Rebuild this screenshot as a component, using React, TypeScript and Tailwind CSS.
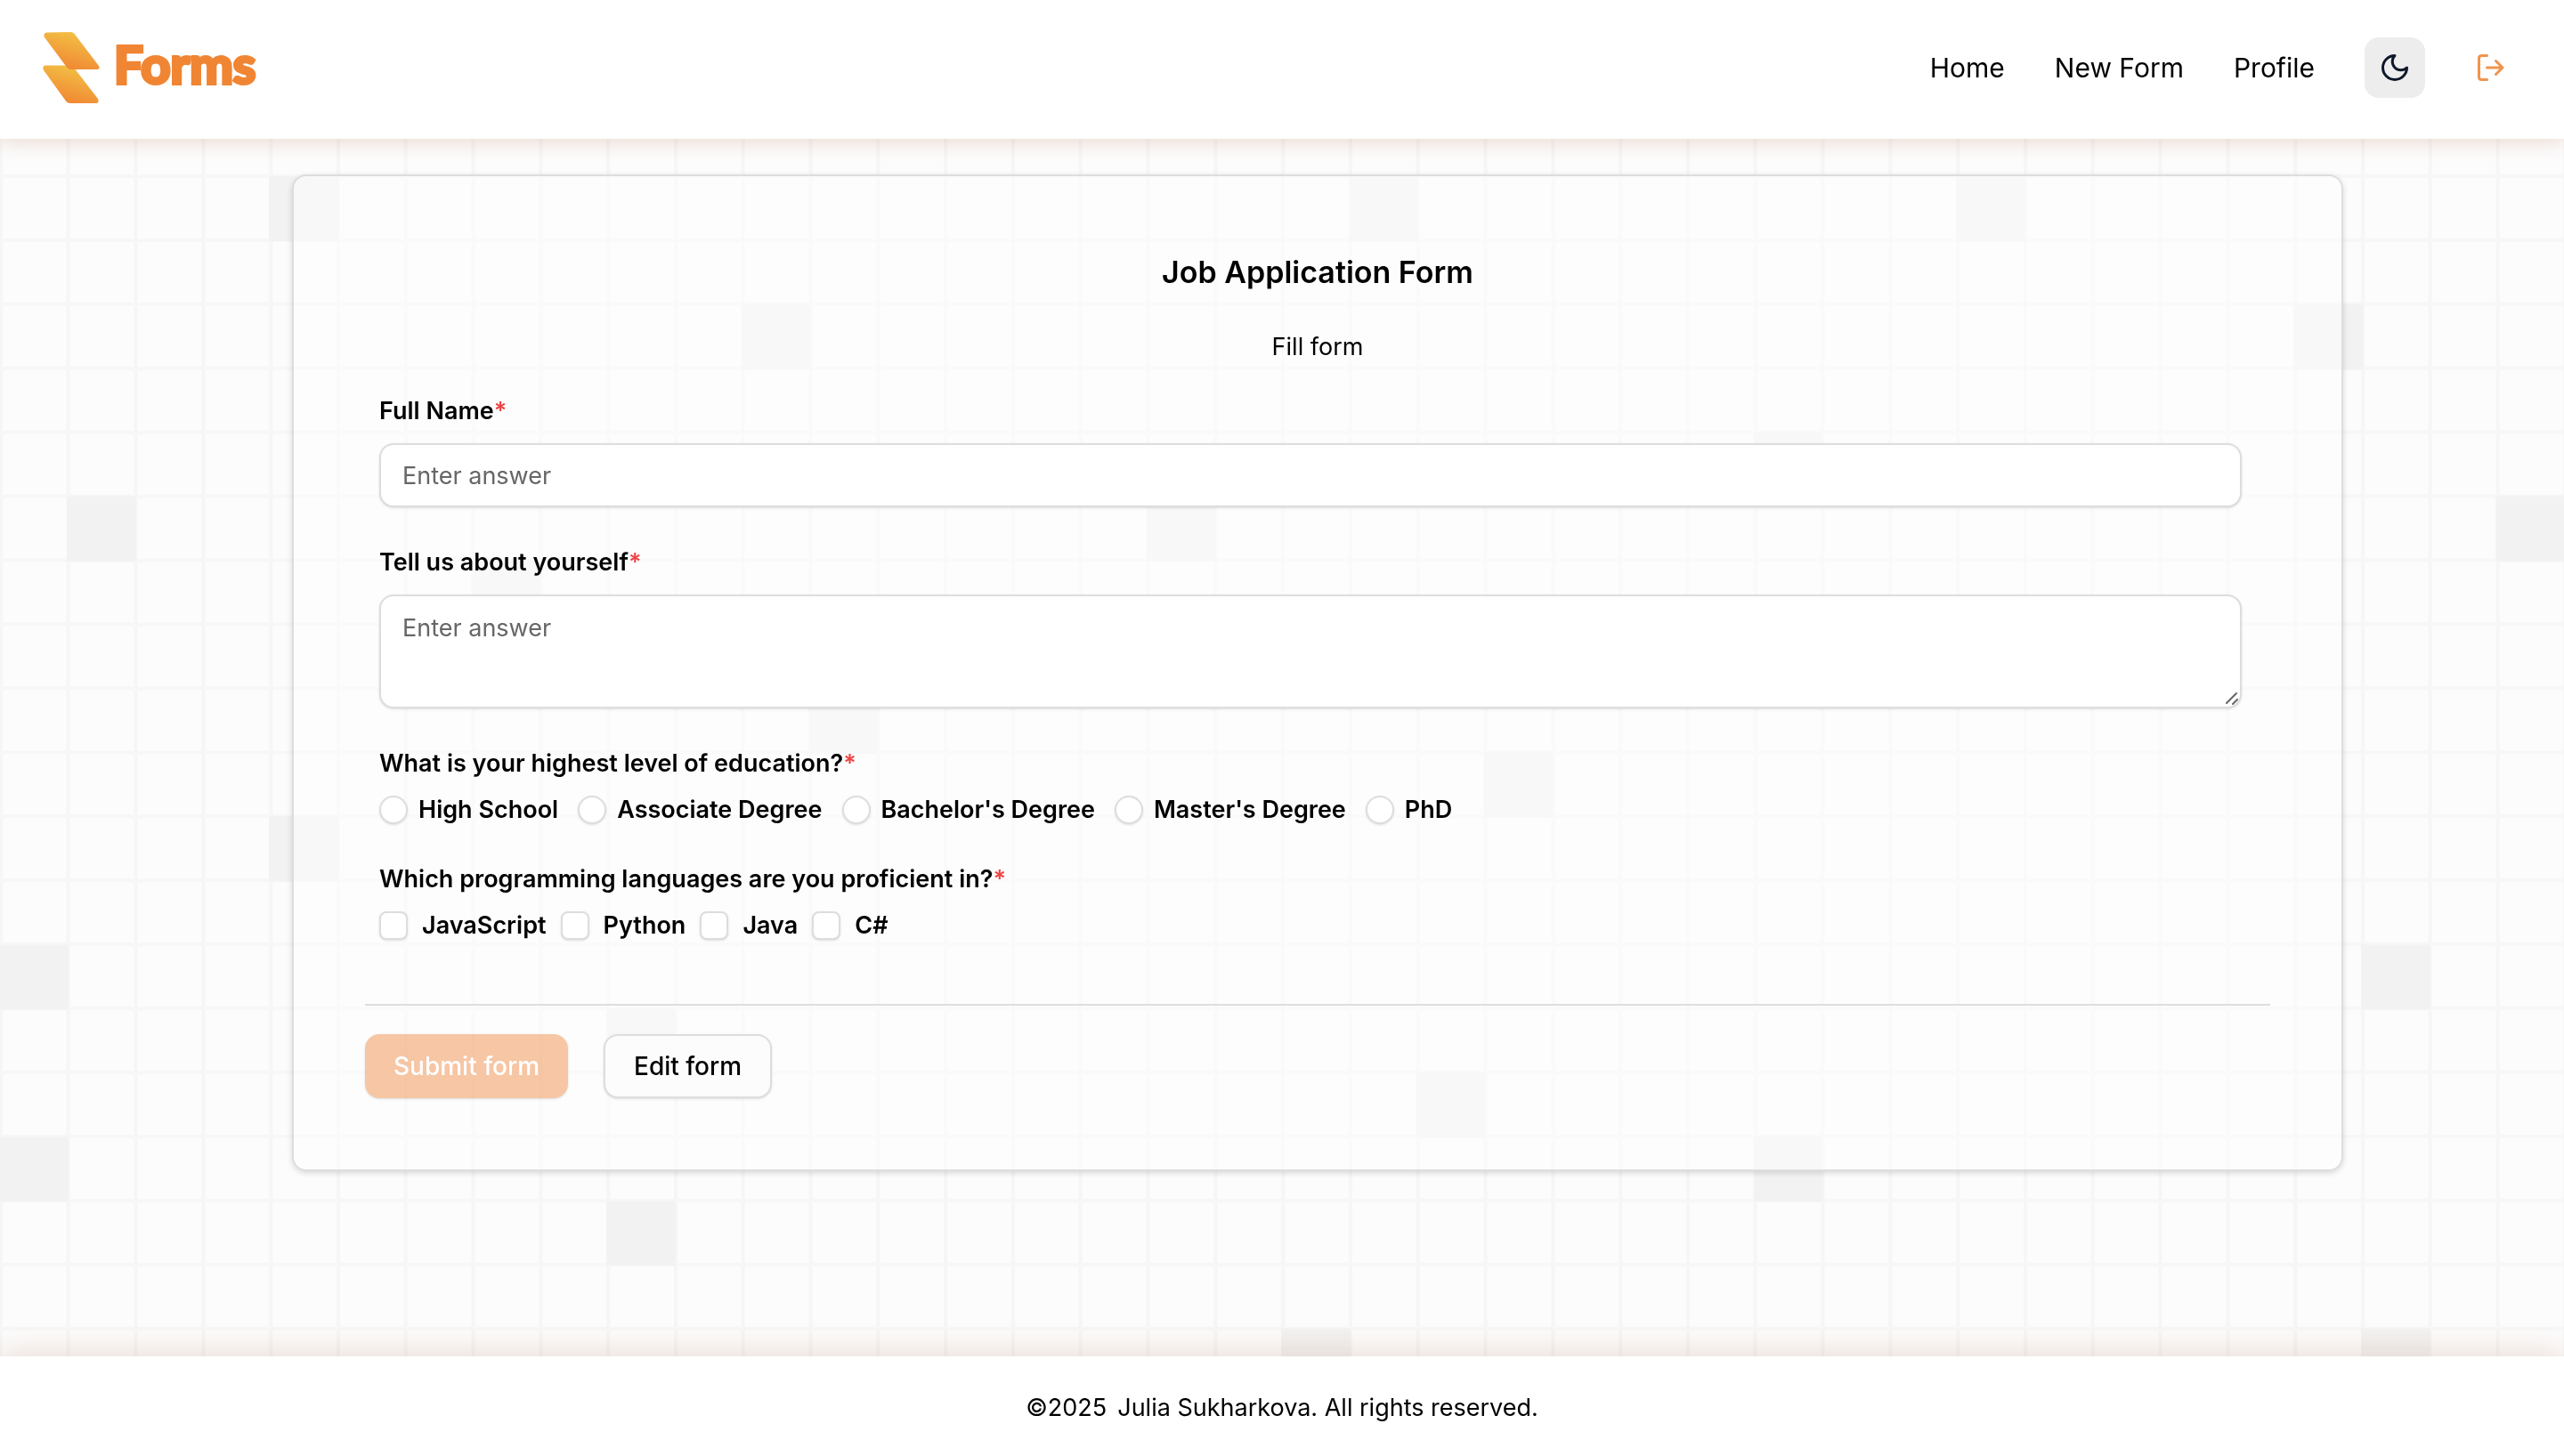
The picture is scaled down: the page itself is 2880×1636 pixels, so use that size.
import React from "react";

const COL = 75.8;
const ROW = 71.94;
const TOP = 126;
const shaded: [number, number][] = [
  [4, 1], [20, 1], [29, 1], [11, 3], [34, 3], [26, 5], [1, 6], [17, 6], [37, 6], [7, 7],
  [12, 9], [22, 10], [4, 11], [0, 13], [35, 13], [9, 14], [21, 15], [0, 16], [26, 16],
  [9, 17], [19, 19], [35, 19],
];
const education = ["High School", "Associate Degree", "Bachelor's Degree", "Master's Degree", "PhD"];
const languages = ["JavaScript", "Python", "Java", "C#"];

function Backdrop() {
  return (
    <svg className="fixed inset-0 -z-10 size-full" viewBox="0 0 2880 1636" preserveAspectRatio="xMidYMid slice" aria-hidden="true">
      <rect width="2880" height="1636" fill="#fcfcfc" />
      {Array.from({ length: 39 }, (_, i) => (
        <path key={i} d={`M${i * COL + 1} 0V1636`} stroke="#f6f6f6" strokeWidth="4" />
      ))}
      {Array.from({ length: 22 }, (_, i) => (
        <path key={i} d={`M0 ${TOP + i * ROW}H2880`} stroke="#f7f7f7" strokeWidth="4" />
      ))}
      {shaded.map(([c, r]) => (
        <rect key={`${c}-${r}`} x={c * COL - 1} y={TOP + r * ROW} width={COL + 2} height={ROW + 1} fill="#f2f2f2" />
      ))}
    </svg>
  );
}

function Logo() {
  return (
    <a href="#" className="flex items-center gap-4" aria-label="Forms">
      <svg className="h-20 w-16" viewBox="0 0 64 80" aria-hidden="true">
        <defs>
          <linearGradient id="bolt" x1="0.75" y1="0" x2="0.35" y2="1">
            <stop offset="0" stopColor="#f3c545" />
            <stop offset="1" stopColor="#f08533" />
          </linearGradient>
        </defs>
        <path d="M3 37.500H30Q33 37.500 35 40L62 75Q64 80 59 80H31Q28 80 26 77.500L1 43Q-1 38 3 37.500Z" fill="url(#bolt)" />
        <path d="M5 0.500L32 0Q34 0 36 2.500L63 38Q65 42 60 42H32Q29 42 27 39.500L2 6Q0 1 5 0.500Z" fill="url(#bolt)" />
      </svg>
      <span className="pb-2 font-[Lato,sans-serif] text-[58px] leading-[72px] font-bold text-[#f08533] [-webkit-text-stroke:4px_#f08533]">Forms</span>
    </a>
  );
}

function Required() {
  return <span className="text-[#ef4444]">*</span>;
}

export default function App() {
  return (
    <div className="isolate flex min-h-screen flex-col font-[Inter,sans-serif] text-[27px] leading-10 text-black">
      <Backdrop />
      <header className="flex h-[156px] items-center justify-between bg-white px-12 pb-1 shadow-[0_4px_20px_rgba(160,70,30,0.18)]">
        <Logo />
        <nav className="flex items-center gap-14 text-[31px]">
          <div className="flex items-center gap-14 text-[30px]">
            <a href="#">Home</a>
            <a href="#">New Form</a>
            <a href="#">Profile</a>
          </div>
          <button type="button" aria-label="Toggle theme" className="grid size-[68px] place-items-center rounded-2xl bg-[#ededed] text-[#0f172a]">
            <svg className="size-9" viewBox="0 0 24 24" fill="none" stroke="currentColor" strokeWidth="2" strokeLinecap="round" strokeLinejoin="round" aria-hidden="true">
              <path d="M12 3a6 6 0 0 0 9 9 9 9 0 1 1-9-9Z" />
            </svg>
          </button>
          <button type="button" aria-label="Log out" className="mr-4 grid size-9 place-items-center text-[#f0944d]">
            <svg width="30" height="30" viewBox="0 0 30 30" fill="none" stroke="currentColor" strokeWidth="3" strokeLinecap="round" strokeLinejoin="round" aria-hidden="true">
              <path d="M10.500 1.500H4.500Q1.500 1.500 1.500 4.500V25.500Q1.500 28.500 4.500 28.500H10.500M10.500 15H28M20.500 7.500L28 15L20.500 22.500" />
            </svg>
          </button>
        </nav>
      </header>

      <main className="flex flex-1 items-start justify-center pt-10 pb-20">
        <form className="ml-20 w-4/5 rounded-2xl border-2 border-[#dddddd] bg-[#fdfdfd]/50 px-20 pt-20 pb-20 shadow-[0_2px_6px_rgba(0,0,0,0.15)]">
          <h1 className="pt-1 text-center text-[34px] leading-[48px] font-semibold">Job Application Form</h1>
          <p className="mt-10 text-center">Fill form</p>
          <div className="flex flex-col gap-[42px] pr-8 pl-4">
            <div className="mt-8 flex flex-col gap-4">
              <label htmlFor="name" className="font-semibold">Full Name<Required /></label>
              <input id="name" placeholder="Enter answer" className="h-[72px] w-full rounded-2xl border-2 border-[#dddddd] bg-white px-6 shadow-sm placeholder:text-[#666666]" />
            </div>
            <div className="flex flex-col gap-4">
              <label htmlFor="about" className="font-semibold">Tell us about yourself<Required /></label>
              <div className="relative flex">
                <textarea id="about" placeholder="Enter answer" className="h-32 w-full resize-none rounded-2xl border-2 border-[#dddddd] bg-white px-6 py-4 shadow-sm placeholder:text-[#666666]" />
                <svg className="absolute right-1 bottom-1 size-4" viewBox="0 0 16 16" stroke="#666666" strokeWidth="2" strokeLinecap="round" aria-hidden="true">
                  <path d="M3 14L14 3M10 15L15 10" />
                </svg>
              </div>
            </div>
            <fieldset>
              <legend className="font-semibold">What is your highest level of education?<Required /></legend>
              <div className="mt-4 flex gap-[22px] leading-8 font-semibold">
                {education.map((e) => (
                  <label key={e} className="flex items-center gap-3">
                    <input type="radio" name="education" className="size-8 appearance-none rounded-full border-2 border-[#dddddd] bg-white shadow-sm" />
                    {e}
                  </label>
                ))}
              </div>
            </fieldset>
            <fieldset>
              <legend className="font-semibold">Which programming languages are you proficient in?<Required /></legend>
              <div className="mt-4 flex gap-4 leading-8 font-semibold">
                {languages.map((l) => (
                  <label key={l} className="flex items-center gap-4">
                    <input type="checkbox" className="size-8 appearance-none rounded-lg border-2 border-[#dddddd] bg-white shadow-sm" />
                    {l}
                  </label>
                ))}
              </div>
            </fieldset>
          </div>
          <hr className="mt-[72px] border-t-2 border-[#dddddd]" />
          <div className="mt-8 flex gap-10 text-[28px] font-medium">
            <button type="submit" disabled className="h-[72px] rounded-2xl bg-[#ee7623]/40 px-8 text-white shadow-sm">Submit form</button>
            <button type="button" className="h-[72px] rounded-2xl border-2 border-[#dddddd] bg-[#fcfcfc] px-8 shadow-sm">Edit form</button>
          </div>
        </form>
      </main>

      <footer className="flex h-28 items-center justify-center gap-3 bg-white pt-1 shadow-[0_-4px_32px_rgba(160,70,30,0.18)]">
        <span>©2025</span>
        <span>Julia Sukharkova. All rights reserved.</span>
      </footer>
    </div>
  );
}
